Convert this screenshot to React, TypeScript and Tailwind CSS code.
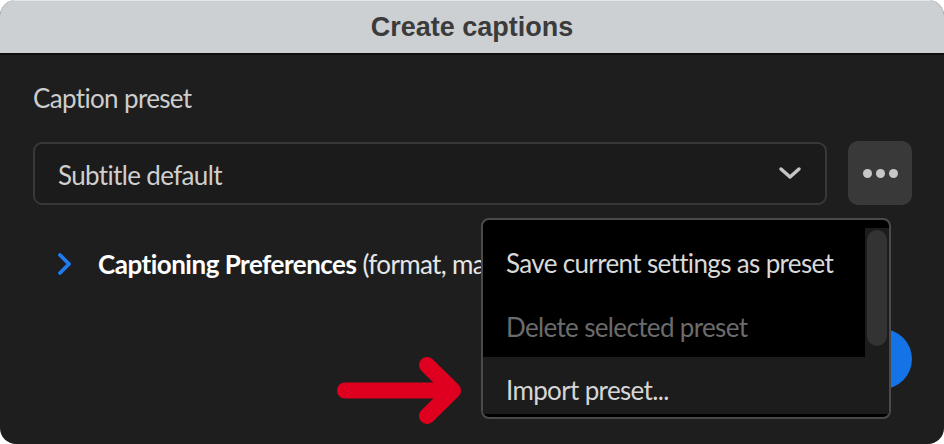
import React from "react";

const body = { fontFamily: "Lato, 'Open Sans', sans-serif" };

export default function App() {
  return (
    <div className="w-[944px] h-[444px] bg-white">
      <div className="relative w-full h-full rounded-[16px] overflow-hidden bg-[#1e1e1e] flex flex-col">
        <div className="h-[55px] shrink-0 bg-[#cdd0d2] border-t border-[#e4e6e7] border-b-2 border-b-[#0e0e0e] flex items-center justify-center">
          <span
            className="text-[27px] font-bold text-[#3b3b3b] pt-[1px]"
            style={{ fontFamily: "'Liberation Sans', Arial, sans-serif" }}
          >
            Create captions
          </span>
        </div>
        <div className="flex-1 pl-[33px] pr-[32px] pt-[28px] tracking-[-0.65px]" style={body}>
          <div className="text-[26px] leading-[30px] text-[#cdcdcd]">Caption preset</div>
          <div className="mt-[28px] flex items-center gap-[21px]">
            <div className="flex-1 h-[63px] rounded-[9px] border-2 border-[#383838] bg-[#1b1b1b] flex items-center justify-between pl-[23px] pr-[23px]">
              <span className="text-[26px] text-[#cfcfcf] pt-[4px]">Subtitle default</span>
              <svg width="24" height="14" viewBox="0 0 24 14">
                <path d="M3 3 L12 11 L21 3" fill="none" stroke="#c4c4c4" strokeWidth="3.5" strokeLinecap="round" strokeLinejoin="round" />
              </svg>
            </div>
            <div className="w-[64px] h-[64px] rounded-[10px] bg-[#393939] flex items-center justify-center gap-[4px]">
              <span className="w-[9px] h-[9px] rounded-full bg-[#c8c8c8]" />
              <span className="w-[9px] h-[9px] rounded-full bg-[#c8c8c8]" />
              <span className="w-[9px] h-[9px] rounded-full bg-[#c8c8c8]" />
            </div>
          </div>
          <div className="mt-[44px] flex items-center pl-[24px] h-[30px]">
            <svg width="16" height="24" viewBox="0 0 16 24" className="shrink-0">
              <path d="M3 3 L12 12 L3 21" fill="none" stroke="#1e7cf0" strokeWidth="3.8" strokeLinecap="round" strokeLinejoin="round" />
            </svg>
            <span className="ml-[25px] w-[383px] overflow-hidden text-[26px] leading-[30px] text-white whitespace-nowrap">
              <span className="font-bold tracking-[-0.5px]">Captioning Preferences</span>
              <span className="text-[#e6e6e6]"> (format, max length, lines)</span>
            </span>
          </div>
          <div className="mt-[50px] flex justify-end">
            <div className="w-[220px] h-[60px] rounded-full bg-[#1473e6]" />
          </div>
        </div>

        <svg className="absolute left-[330px] top-[345px]" width="145" height="95" viewBox="330 345 145 95">
          <path d="M345 390.5 H452 M427 365 L453 390.5 L427 416" fill="none" stroke="#df0020" strokeWidth="16" strokeLinecap="round" strokeLinejoin="round" />
        </svg>

        <div
          className="absolute left-[481px] top-[218px] w-[410px] h-[201px] rounded-[8px] border-2 border-[#4a4a4a] bg-black pt-[8px] pb-[3px] flex flex-col overflow-hidden tracking-[-0.65px]"
          style={body}
        >
          <div className="flex flex-1 min-h-0">
            <div className="flex-1 overflow-hidden">
              <div className="h-[65px] flex items-center pl-[23px] pt-[5px] text-[26px] text-[#d9d9d9] whitespace-nowrap">Save current settings as preset</div>
              <div className="h-[64px] flex items-center pl-[23px] pt-[5px] text-[26px] text-[#6b6b6b] whitespace-nowrap">Delete selected preset</div>
              <div className="h-[64px] flex items-center pl-[23px] pt-[3px] text-[26px] text-[#d6d6d6] bg-[#1c1c1c] whitespace-nowrap">Import preset...</div>
            </div>
            <div className="w-[24px] bg-[#1c1c1c] pt-[2px] px-[2px]">
              <div className="h-[116px] rounded-full bg-[#333333]" />
            </div>
          </div>
        </div>
      </div>
    </div>
  );
}
